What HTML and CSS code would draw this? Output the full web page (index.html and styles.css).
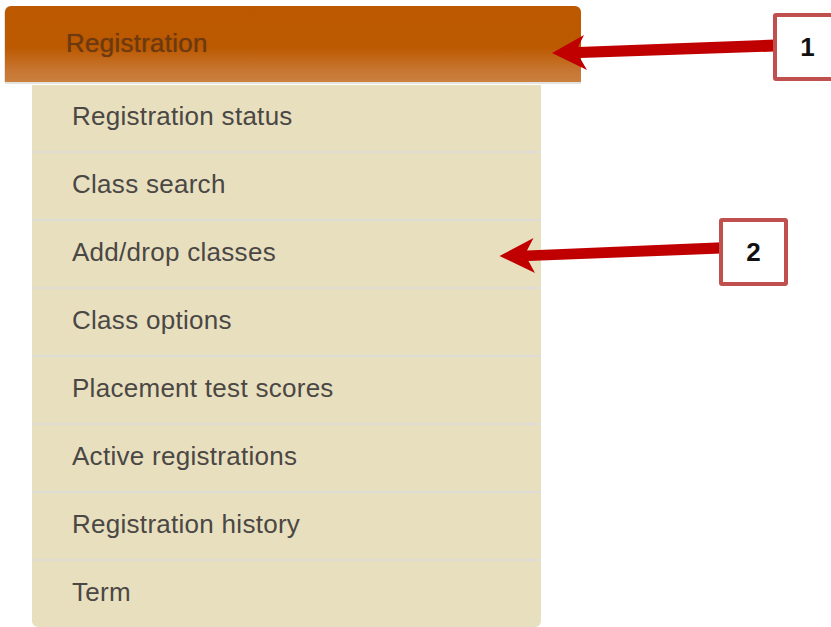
FILE: index.html
```html
<!DOCTYPE html>
<html lang="en">
<head>
<meta charset="utf-8">
<title>Registration</title>
<link rel="stylesheet" href="styles.css">
</head>
<body>
  <nav class="menu">
    <div class="menu-head">Registration</div>
    <ul class="menu-list">
      <li>Registration status</li>
      <li>Class search</li>
      <li>Add/drop classes</li>
      <li>Class options</li>
      <li>Placement test scores</li>
      <li>Active registrations</li>
      <li>Registration history</li>
      <li>Term</li>
    </ul>
  </nav>

  <!-- callout arrows pointing at the menu -->
  <svg class="callouts" width="831" height="627" viewBox="0 0 831 627">
    <polygon points="552,53 584,35 578,47 775,39.5 775,51.5 580,58 587,70" />
    <polygon points="499.5,256 533.5,238 527,250.5 722,242.3 722,253.5 528.5,261 535,273" />
  </svg>
  <div class="tag tag-1">1</div>
  <div class="tag tag-2">2</div>
</body>
</html>
```

FILE: styles.css
```css
html, body {
  margin: 0;
  padding: 0;
  background: #ffffff;
}

body {
  width: 831px;
  height: 627px;
  overflow: hidden;
  padding-top: 6px;
  box-sizing: border-box;
  font-family: "Liberation Sans", Arial, sans-serif;
}

.menu {
  display: flex;
  flex-direction: column;
}

.menu-head {
  margin-left: 5px;
  width: 576px;
  height: 76px;
  box-sizing: border-box;
  padding-left: 61px;
  padding-bottom: 2px;
  line-height: 74px;
  font-size: 26px;
  letter-spacing: 0.25px;
  color: #6b3a12;
  text-shadow: 0 0 1px rgba(70, 30, 0, 0.45);
  border-radius: 6px 6px 0 0;
  background: linear-gradient(to bottom, #bb5800 0%, #bc5a02 55%, #c77632 85%, #ca803f 100%);
  box-shadow: 0 2px 0 #e4e2de, -1px 0 0 #e6e2dc;
}

.menu-list {
  list-style: none;
  margin: 3px 0 0 32px;
  padding: 0;
  width: 509px;
  background: #e8dfbf;
  border-radius: 0 0 6px 6px;
  overflow: hidden;
}

.menu-list li {
  height: 68px;
  box-sizing: border-box;
  padding-left: 40px;
  padding-bottom: 3px;
  line-height: 63px;
  font-size: 26px;
  letter-spacing: 0.28px;
  color: #4a4744;
  border-bottom: 2px solid #dedcd6;
}

.menu-list li:last-child {
  height: 66px;
  border-bottom: none;
}

.callouts {
  position: absolute;
  left: 0;
  top: 0;
  pointer-events: none;
}

.callouts polygon {
  fill: #c00000;
}

.tag {
  position: absolute;
  box-sizing: border-box;
  width: 69px;
  height: 68px;
  border: 4px solid #c0504d;
  border-radius: 3px;
  background: #ffffff;
  display: flex;
  align-items: center;
  justify-content: center;
  font-family: "Liberation Sans", Arial, sans-serif;
  font-weight: bold;
  font-size: 26px;
  color: #111111;
}

.tag-1 {
  left: 773px;
  top: 13px;
}

.tag-2 {
  left: 719px;
  top: 218px;
}
```
